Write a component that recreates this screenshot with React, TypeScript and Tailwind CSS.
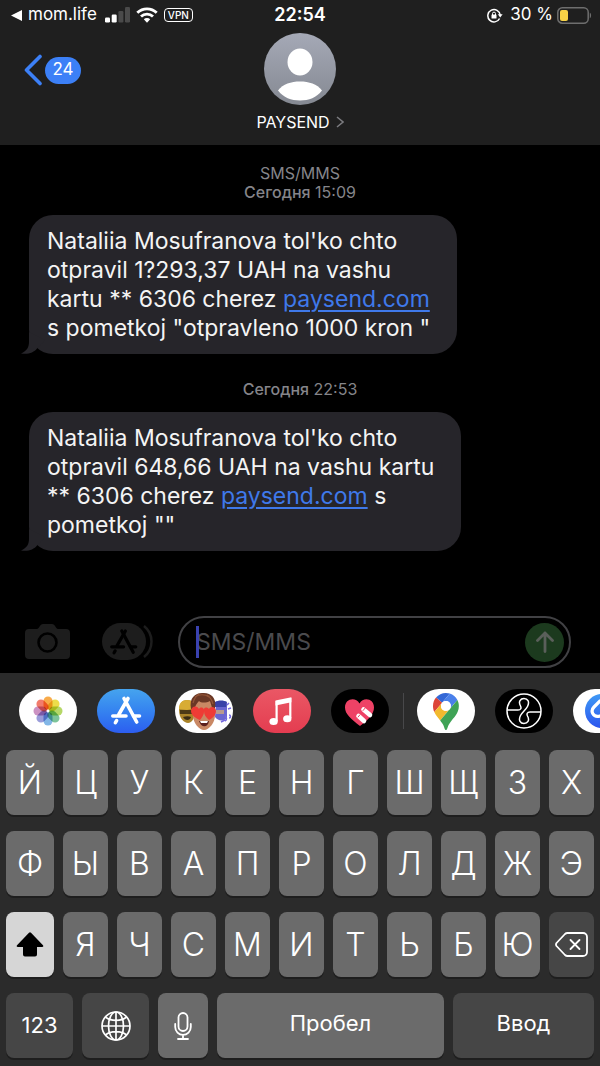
import type { ReactNode } from 'react'

interface Message {
    id: string
    channel?: string
    time: string
    body: ReactNode
}

interface AppShortcut {
    label: string
    className: string
    icon: ReactNode
}

const ROW_ONE = ['Й', 'Ц', 'У', 'К', 'Е', 'Н', 'Г', 'Ш', 'Щ', 'З', 'Х']
const ROW_TWO = ['Ф', 'Ы', 'В', 'А', 'П', 'Р', 'О', 'Л', 'Д', 'Ж', 'Э']
const ROW_THREE = ['Я', 'Ч', 'С', 'М', 'И', 'Т', 'Ь', 'Б', 'Ю']

const PETALS = [
    { angle: 0, color: '#f8ab4a' },
    { angle: 45, color: '#ecdd4a' },
    { angle: 90, color: '#b5d767' },
    { angle: 135, color: '#7cc49a' },
    { angle: 180, color: '#82b6e6' },
    { angle: 225, color: '#9a9cda' },
    { angle: 270, color: '#cb92c2' },
    { angle: 315, color: '#f27c6c' }
]

const PaysendLink = () => (
    <a href="https://paysend.com" className="text-[#3f79ea] underline decoration-2 underline-offset-3">
        paysend.com
    </a>
)

const MESSAGES: Message[] = [
    {
        id: 'first',
        channel: 'SMS/MMS',
        time: '15:09',
        body: (
            <>
                Nataliia Mosufranova tol'ko chto<br />
                otpravil 1?293,37 UAH na vashu<br />
                kartu ** 6306 cherez <PaysendLink /><br />
                s pometkoj "otpravleno 1000 kron "
            </>
        )
    },
    {
        id: 'second',
        time: '22:53',
        body: (
            <>
                Nataliia Mosufranova tol'ko chto<br />
                otpravil 648,66 UAH na vashu kartu<br />
                ** 6306 cherez <PaysendLink /> s<br />
                pometkoj ""
            </>
        )
    }
]

function AppStoreGlyph() {
    return (
        <g fill="none" stroke="currentColor" strokeLinecap="round" strokeWidth="3.6">
            <path d="M27 9.5 39.7 33" />
            <path d="M31 9.5 21.8 25.5" />
            <path d="M15.8 27H29M36.5 27H42.5" />
            <path d="M19.6 31.6 18.4 33.6" />
        </g>
    )
}

function PhotosIcon() {
    return (
        <svg viewBox="0 0 58 44" className="h-full w-full isolate">
            {PETALS.map(petal => (
                <rect
                    key={petal.angle}
                    x="24.5"
                    y="7.5"
                    width="9"
                    height="13.5"
                    rx="4.5"
                    fill={petal.color}
                    className="mix-blend-multiply"
                    transform={`rotate(${petal.angle} 29 22)`}
                />
            ))}
            <circle cx="29" cy="22" r="1.4" fill="#fff" />
        </svg>
    )
}

function MemojiIcon() {
    return (
        <svg viewBox="0 0 58 44" className="h-full w-full">
            <path d="M4 21c0-6 3-10 8-10s8 3 8 10c0 8-3 13-7 13S4 29 4 21z" fill="#a98329" />
            <path d="M4 20c0-6 3-9 8-9s8 3 8 8l-8 2z" fill="#d8ac35" />
            <path d="M5 21h12v4H5z" fill="#4c3a16" />
            <path d="M8 28c3-1 6-1 8 0-1 4-6 4-8 0z" fill="#3a2c14" />
            <path d="M41 15c1-3 10-3 11 0v14c-4 4-9 3-12-1z" fill="#6b67cf" />
            <path d="M40 13c3-2 9-2 12 0l-1 5H40z" fill="#3942a8" />
            <path d="M41 21h8v4h-8z" fill="#b99a8e" />
            <path d="M50 27c2 1 2 4 0 5M54 26c2 0 2 3 0 3M52 16l2-2M53 20l3-1M50 31l-4 2" stroke="#7569df" strokeWidth="1.5" fill="none" />
            <path d="M18 18c0-6 4-10 11-10s11 4 11 10v8c0 8-6 15-11 15S18 34 18 26z" fill="#c98864" />
            <path d="M16 20C14 9 20 4 27 4c8-1 15 4 13 15l-2 3-3-10c-4 2-9 2-11 0-2 2-4 5-5 9z" fill="#6a3826" />
            <path d="M20 8c4-3 10-3 14 0M24 5c-3 2-5 5-6 9M32 6c3 2 5 5 6 9" stroke="#945638" strokeWidth="1.2" fill="none" />
            <path d="M25 31c-5-2-9-5-9-9 0-5 6-6 8-2 2-3 6-1 5 3 0 3-2 5-4 8z" fill="#ee3b35" />
            <path d="M34 31c4-2 7-5 7-9 0-5-6-5-7-2-3-3-6-1-5 2 0 4 2 6 5 9z" fill="#ee3b35" />
            <path d="M24 32h10c-1 7-8 7-10 0z" fill="#5b1f1d" />
            <path d="M25 32h8l-1 2h-6z" fill="#fff" />
        </svg>
    )
}

function MusicIcon() {
    return (
        <svg viewBox="0 0 58 44" className="h-full w-full" fill="#fff">
            <path d="M22.5 11.6 38.4 8.2v5L22.5 16.6z" />
            <path d="M22.5 12h2.2v20h-2.2zM36.2 9h2.2v20h-2.2z" />
            <ellipse cx="20.6" cy="32.6" rx="4.2" ry="3.5" />
            <ellipse cx="34.3" cy="29.7" rx="4.2" ry="3.5" />
        </svg>
    )
}

function HeartIcon() {
    return (
        <svg viewBox="0 0 58 44" className="h-full w-full">
            <path d="M29 37C20 30 14 25 14 18.5c0-9 10.5-11 14.5-4 4-7 14.5-5 14.5 4C43 25 37 31 29 37z" fill="#ee4266" />
            <g stroke="#fff" strokeWidth="4.6" strokeLinecap="round">
                <path d="m32.500 20.500 6.500 5.500" />
                <path d="m27.500 27 5.500 5" />
            </g>
            <g stroke="#ee4266" strokeWidth="1">
                <path d="m31.800 21.800 2.400-2.800M26.800 28.300l2.400-2.800" />
            </g>
        </svg>
    )
}

function MapsIcon() {
    return (
        <svg viewBox="0 0 92.3 132.3" className="mx-auto h-[37px]">
            <path fill="#3367d6" d="M60.2 2.2C55.8.8 51 0 46.1 0 32 0 19.3 6.4 10.8 16.5l21.8 18.3L60.2 2.2z" />
            <path fill="#dc4437" d="M10.8 16.5C4.1 24.5 0 34.9 0 46.1c0 8.7 1.7 15.7 4.6 22l28-33.3-21.8-18.3z" />
            <path fill="#4a80ea" d="M46.2 28.5c9.8 0 17.7 7.9 17.7 17.7 0 4.3-1.6 8.3-4.2 11.4 0 0 13.9-16.6 27.5-32.7-5.6-10.8-15.3-19-27-22.7L32.6 34.8c3.3-3.8 8.1-6.3 13.6-6.3" />
            <path fill="#f2b92e" d="M46.2 63.8c-9.8 0-17.7-7.9-17.7-17.7 0-4.3 1.5-8.3 4.1-11.3l-28 33.3c4.8 10.6 12.8 19.2 21 29.9l34.1-40.5c-3.3 3.9-8.1 6.3-13.5 6.3" />
            <path fill="#3fa356" d="M59.1 109.2c15.4-24.1 33.3-35 33.3-63 0-7.7-1.9-14.9-5.2-21.3L25.6 98c2.6 3.4 5.3 7.3 7.9 11.3 9.4 14.5 6.8 23.1 12.8 23.1s3.4-8.7 12.8-23.2" />
            <circle cx="46.2" cy="46.2" r="17.7" fill="#fff" />
        </svg>
    )
}

function KnotIcon() {
    return (
        <svg viewBox="0 0 58 44" className="h-full w-full" fill="none" stroke="#fff" strokeWidth="1.5">
            <circle cx="29" cy="22" r="17" />
            <path d="M12 21h11c3 0 3.500-2 2.500-4C23 12.500 25.500 9.500 29 9.500s6 3 3.500 8C31 20.500 27 23.500 25.500 26.500c-2.500 5 0 8 3.500 8s6-3 3.500-7.500c-1-2-.5-4 2.500-4h11" />
        </svg>
    )
}

function ShazamIcon() {
    return (
        <svg viewBox="0 0 58 44" className="h-full w-full">
            <defs>
                <linearGradient id="shazam" x1="0" y1="0" x2="0" y2="1">
                    <stop offset="0" stopColor="#3f9af5" />
                    <stop offset="1" stopColor="#2b55ee" />
                </linearGradient>
            </defs>
            <circle cx="29" cy="22" r="17" fill="url(#shazam)" />
            <g fill="none" stroke="#fff" strokeWidth="3.2" strokeLinecap="round">
                <path d="M27 27c-7 2-10-5-6-9l6-6" />
                <path d="M31 17c7-2 10 5 6 9l-6 6" />
            </g>
        </svg>
    )
}

const BUILT_IN_APPS: AppShortcut[] = [
    { label: 'Фото', className: 'bg-white', icon: <PhotosIcon /> },
    {
        label: 'App Store',
        className: 'bg-linear-to-b from-[#46a4ee] to-[#2d5df0] text-white',
        icon: <svg viewBox="0 0 58 44" className="h-full w-full"><AppStoreGlyph /></svg>
    },
    { label: 'Memoji', className: 'bg-white', icon: <MemojiIcon /> },
    { label: 'Музыка', className: 'bg-linear-to-b from-[#ea5765] to-[#e43c50]', icon: <MusicIcon /> },
    { label: 'Digital Touch', className: 'bg-black', icon: <HeartIcon /> }
]

const EXTRA_APPS: AppShortcut[] = [
    { label: 'Google Maps', className: 'bg-white', icon: <MapsIcon /> },
    { label: 'Endel', className: 'bg-black', icon: <KnotIcon /> },
    { label: 'Shazam', className: 'bg-white', icon: <ShazamIcon /> }
]

function StatusBar() {
    return (
        <div className="grid h-[30px] grid-cols-[1fr_auto_1fr] items-center text-[17px] text-white">
            <div className="flex items-center pl-[11px]">
                <svg viewBox="0 0 11 11" className="w-[11px]" fill="currentColor">
                    <path d="M0 5.500 11 0v11z" />
                </svg>
                <span className="ml-[6px]">mom.life</span>
                <svg viewBox="0 0 25 16" className="ml-2 w-[25px]" fill="currentColor">
                    <rect y="10.5" width="5" height="5" rx="1.2" />
                    <rect x="6.7" y="7.5" width="5" height="8" rx="1.2" />
                    <g fill="#4a4a4a">
                        <rect x="13.4" y="4" width="5" height="11.5" rx="1.2" />
                        <rect x="20" width="5" height="15.5" rx="1.2" />
                    </g>
                </svg>
                <svg viewBox="0 0 22 16" className="ml-[6px] w-[22px]" fill="none" stroke="currentColor" strokeWidth="2.8">
                    <path d="M1.3 5.8a13.8 13.8 0 0 1 19.4 0" />
                    <path d="M5 9.600a8.500 8.500 0 0 1 12 0" />
                    <path d="M7.800 12.300a4.600 4.600 0 0 1 6.400 0L11 15.700z" fill="currentColor" stroke="none" />
                </svg>
                <span className="ml-[6px] flex h-[14px] items-center rounded-sm border border-white px-[3px] text-[10px] leading-none font-medium">VPN</span>
            </div>
            <time className="text-lg font-semibold">22:54</time>
            <div className="flex items-center justify-end pr-2">
                <svg viewBox="0 0 16 15" className="w-4" fill="none" stroke="currentColor" strokeWidth="1.5">
                    <path d="M12.600 10.500A6.200 6.200 0 1 1 13.200 7" />
                    <path d="M10.800 6.200h4.800l-2.400 3.400z" fill="currentColor" stroke="none" />
                    <rect x="4.5" y="6.5" width="5" height="4" rx=".6" fill="currentColor" stroke="none" />
                    <path d="M5.500 7V5.600a1.500 1.500 0 0 1 3 0V7" strokeWidth="1" />
                </svg>
                <span className="ml-[7px]">30 %</span>
                <svg viewBox="0 0 35 17" className="ml-1 w-[35px]">
                    <rect x=".8" y=".8" width="30.4" height="15.4" rx="4.5" fill="none" stroke="#6e6e6e" strokeWidth="1.5" />
                    <rect x="3" y="3" width="8" height="11" rx="2" fill="#f7d246" />
                    <path d="M32.800 5.800c1.700.5 1.700 4.900 0 5.400z" fill="#6e6e6e" />
                </svg>
            </div>
        </div>
    )
}

function Header() {
    return (
        <header className="bg-[#1f1f1f]">
            <StatusBar />
            <div className="grid h-[115px] grid-cols-[1fr_auto_1fr]">
                <div>
                    <button type="button" aria-label="Назад" className="mt-[24px] ml-6 flex items-center gap-[3px]">
                        <svg viewBox="0 0 18 32" className="w-[18px]" fill="none" stroke="#3c80f7" strokeWidth="3.6" strokeLinecap="round" strokeLinejoin="round">
                            <path d="M16 2.500 2.500 16 16 29.500" />
                        </svg>
                        <span className="flex h-[27px] w-9 items-center justify-center rounded-full bg-[#3c80f7] text-[17px] text-white">24</span>
                    </button>
                </div>
                <button type="button" className="flex flex-col items-center">
                    <svg viewBox="0 0 72 72" className="mt-[3px] w-[72px]">
                        <defs>
                            <linearGradient id="avatar" x1="0" y1="0" x2="0" y2="1">
                                <stop offset="0" stopColor="#a5a9b6" />
                                <stop offset="1" stopColor="#858992" />
                            </linearGradient>
                        </defs>
                        <circle cx="36" cy="36" r="36" fill="url(#avatar)" />
                        <ellipse cx="36" cy="29" rx="12.5" ry="13.5" fill="#fff" />
                        <path d="M14 57.500C19 51 27 48.500 36 48.500S53 51 58 57.500C52.500 64.500 45 67.500 36 67.500S19.500 64.500 14 57.500z" fill="#fff" />
                    </svg>
                    <span className="mt-[5px] flex items-center gap-[6px] text-base text-white">
                        PAYSEND
                        <svg viewBox="0 0 8 12" className="w-2" fill="none" stroke="#7c7c80" strokeWidth="1.5">
                            <path d="m1 1 6 5-6 5" />
                        </svg>
                    </span>
                </button>
            </div>
        </header>
    )
}

function MessageBubble({ message }: { message: Message }) {
    return (
        <article>
            <p className="text-center text-base leading-[19px] text-[#85858a]">
                {message.channel && <span className="block">{message.channel}</span>}
                <span className="font-medium">Сегодня</span> {message.time}
            </p>
            <div className="relative mt-[13px] ml-[29px] w-fit rounded-[24px] bg-[#26252a] pt-3 pr-[27px] pb-[11px] pl-[18px] text-[23px] leading-[29px] text-[#f4f4f4]">
                <svg viewBox="0 0 24 22" className="absolute bottom-0 -left-2 w-6" fill="#26252a">
                    <path d="M8 0v10c0 5-2 9-8 11.500 7 1.300 13-1 16-5L24 8z" />
                </svg>
                <p className="relative">{message.body}</p>
            </div>
        </article>
    )
}

function Composer() {
    return (
        <form className="flex items-center pr-[29px] pb-[5px] pl-[25px]" onSubmit={e => e.preventDefault()}>
            <button type="button" aria-label="Камера" className="shrink-0">
                <svg viewBox="0 0 46 36" className="w-[46px]" fill="#1d1d1d">
                    <path d="M4 5h8c2 0 3-5 6-5h9c3 0 4 5 6 5h8a4 4 0 0 1 4 4v22a4 4 0 0 1-4 4H4a4 4 0 0 1-4-4V9a4 4 0 0 1 4-4z" />
                    <circle cx="22.5" cy="18.5" r="9" fill="none" stroke="#000" strokeWidth="2.6" />
                </svg>
            </button>
            <button type="button" aria-label="Приложения" className="ml-[31px] shrink-0">
                <svg viewBox="0 0 51 38" className="w-[51px]">
                    <rect width="44" height="37" rx="18.5" fill="#1d1d1d" />
                    <path d="M42 3c10 8 10 23 0 31" fill="none" stroke="#1d1d1d" strokeWidth="2.5" />
                    <g transform="translate(-4.5 -.5) scale(.9)" color="#000"><AppStoreGlyph /></g>
                </svg>
            </button>
            <div className="relative ml-[25px] flex h-[52px] min-w-0 flex-1 items-center rounded-full border-2 border-[#414144] pr-[5px] pl-4">
                <span className="absolute left-4 h-8 w-[3px] bg-[#3a42b0]" />
                <input
                    type="text"
                    aria-label="Сообщение"
                    placeholder="SMS/MMS"
                    className="w-full min-w-0 flex-1 bg-transparent text-[23px] text-white outline-none placeholder:text-[#4a4a4d]"
                />
                <button type="submit" aria-label="Отправить" className="flex size-[39px] shrink-0 items-center justify-center rounded-full bg-[#1c3a1e]">
                    <svg viewBox="0 0 18 22" className="w-[18px]" fill="none" stroke="#5a5f5a" strokeWidth="2.8" strokeLinecap="round" strokeLinejoin="round">
                        <path d="M9 20.500V2M1.500 9.500 9 2l7.500 7.500" />
                    </svg>
                </button>
            </div>
        </form>
    )
}

function AppButton({ app }: { app: AppShortcut }) {
    return (
        <button type="button" aria-label={app.label} className={`h-11 w-[58px] shrink-0 overflow-hidden rounded-full ${app.className}`}>
            {app.icon}
        </button>
    )
}

function AppStrip() {
    return (
        <div className="flex items-center overflow-hidden pt-4 pb-[17px] pl-[19px]">
            <div className="flex gap-5">
                {BUILT_IN_APPS.map(app => <AppButton key={app.label} app={app} />)}
            </div>
            <div className="mr-[13px] ml-[14px] h-9 w-px shrink-0 bg-[#48484a]" />
            <div className="flex gap-5">
                {EXTRA_APPS.map(app => <AppButton key={app.label} app={app} />)}
            </div>
        </div>
    )
}

function LetterKey({ letter }: { letter: string }) {
    return (
        <button
            type="button"
            className="h-[65px] flex-1 rounded-lg bg-[#6b6b6b] text-[32px] font-light text-white shadow-[0_2px_0_#1e1e1e] first:w-12 first:flex-none"
        >
            {letter}
        </button>
    )
}

function Keyboard() {
    return (
        <div className="flex flex-col gap-4 px-[6px] pb-2 text-white">
            <div className="flex gap-[9px]">
                {ROW_ONE.map(letter => <LetterKey key={letter} letter={letter} />)}
            </div>
            <div className="flex gap-[9px]">
                {ROW_TWO.map(letter => <LetterKey key={letter} letter={letter} />)}
            </div>
            <div className="flex gap-[9px]">
                <button type="button" aria-label="Shift" className="flex h-[65px] w-12 items-center justify-center rounded-lg bg-[#d6d6d6] shadow-[0_2px_0_#1e1e1e]">
                    <svg viewBox="0 0 28 25" className="w-7" fill="#000">
                        <path d="M13 .8q1-.9 2 0l12 12.400q1 1.800-1 1.800h-5v7.500q0 2-2 2H9q-2 0-2-2V15H2q-2 0-1-1.800z" />
                    </svg>
                </button>
                {ROW_THREE.map(letter => <LetterKey key={letter} letter={letter} />)}
                <button type="button" aria-label="Удалить" className="flex h-[65px] flex-1 items-center justify-center rounded-lg bg-[#464646] shadow-[0_2px_0_#1e1e1e]">
                    <svg viewBox="0 0 33 25" className="w-[33px]" fill="none" stroke="currentColor" strokeWidth="1.8" strokeLinecap="round" strokeLinejoin="round">
                        <path d="M12.500 1H28a4 4 0 0 1 4 4v15a4 4 0 0 1-4 4H12.500q-1.500 0-2.500-1L1.500 14q-1-1.500 0-3L10 2q1-1 2.500-1z" />
                        <path d="m15.500 8 9 9M24.500 8l-9 9" />
                    </svg>
                </button>
            </div>
            <div className="flex gap-[9px] text-[22px]">
                <button type="button" className="h-[65px] w-[67px] rounded-lg bg-[#464646] shadow-[0_2px_0_#1e1e1e]">123</button>
                <button type="button" aria-label="Язык" className="flex h-[65px] w-[67px] items-center justify-center rounded-lg bg-[#464646] shadow-[0_2px_0_#1e1e1e]">
                    <svg viewBox="0 0 30 30" className="w-[30px]" fill="none" stroke="currentColor" strokeWidth="1.7">
                        <circle cx="15" cy="15" r="14" />
                        <ellipse cx="15" cy="15" rx="7.5" ry="14" />
                        <path d="M15 1v28M1 15h28M4.500 6c5 4.500 16 4.500 21 0M4.500 24c5-4.500 16-4.500 21 0" />
                    </svg>
                </button>
                <button type="button" aria-label="Диктовка" className="flex h-[65px] w-[50px] items-center justify-center rounded-lg bg-[#6b6b6b] shadow-[0_2px_0_#1e1e1e]">
                    <svg viewBox="0 0 18 28" className="w-[18px]" fill="none" stroke="currentColor" strokeWidth="1.8" strokeLinecap="round">
                        <rect x="4.5" y="1" width="9" height="18" rx="4.5" />
                        <path d="M1.200 12v3a7.800 7.800 0 0 0 15.600 0v-3M9 23v4M4 27h10" />
                    </svg>
                </button>
                <button type="button" className="h-[65px] flex-1 rounded-lg bg-[#6b6b6b] pb-1 shadow-[0_2px_0_#1e1e1e]">Пробел</button>
                <button type="button" className="h-[65px] w-[141px] rounded-lg bg-[#464646] pb-1 shadow-[0_2px_0_#1e1e1e]">Ввод</button>
            </div>
        </div>
    )
}

export default function App() {
    return (
        <div className="flex min-h-screen flex-col bg-black font-['Inter',sans-serif]">
            <Header />
            <main className="flex flex-1 flex-col gap-[26px] pt-[19px] pb-8">
                {MESSAGES.map(message => <MessageBubble key={message.id} message={message} />)}
            </main>
            <Composer />
            <footer className="bg-[#2b2b2b]">
                <AppStrip />
                <Keyboard />
            </footer>
        </div>
    )
}
